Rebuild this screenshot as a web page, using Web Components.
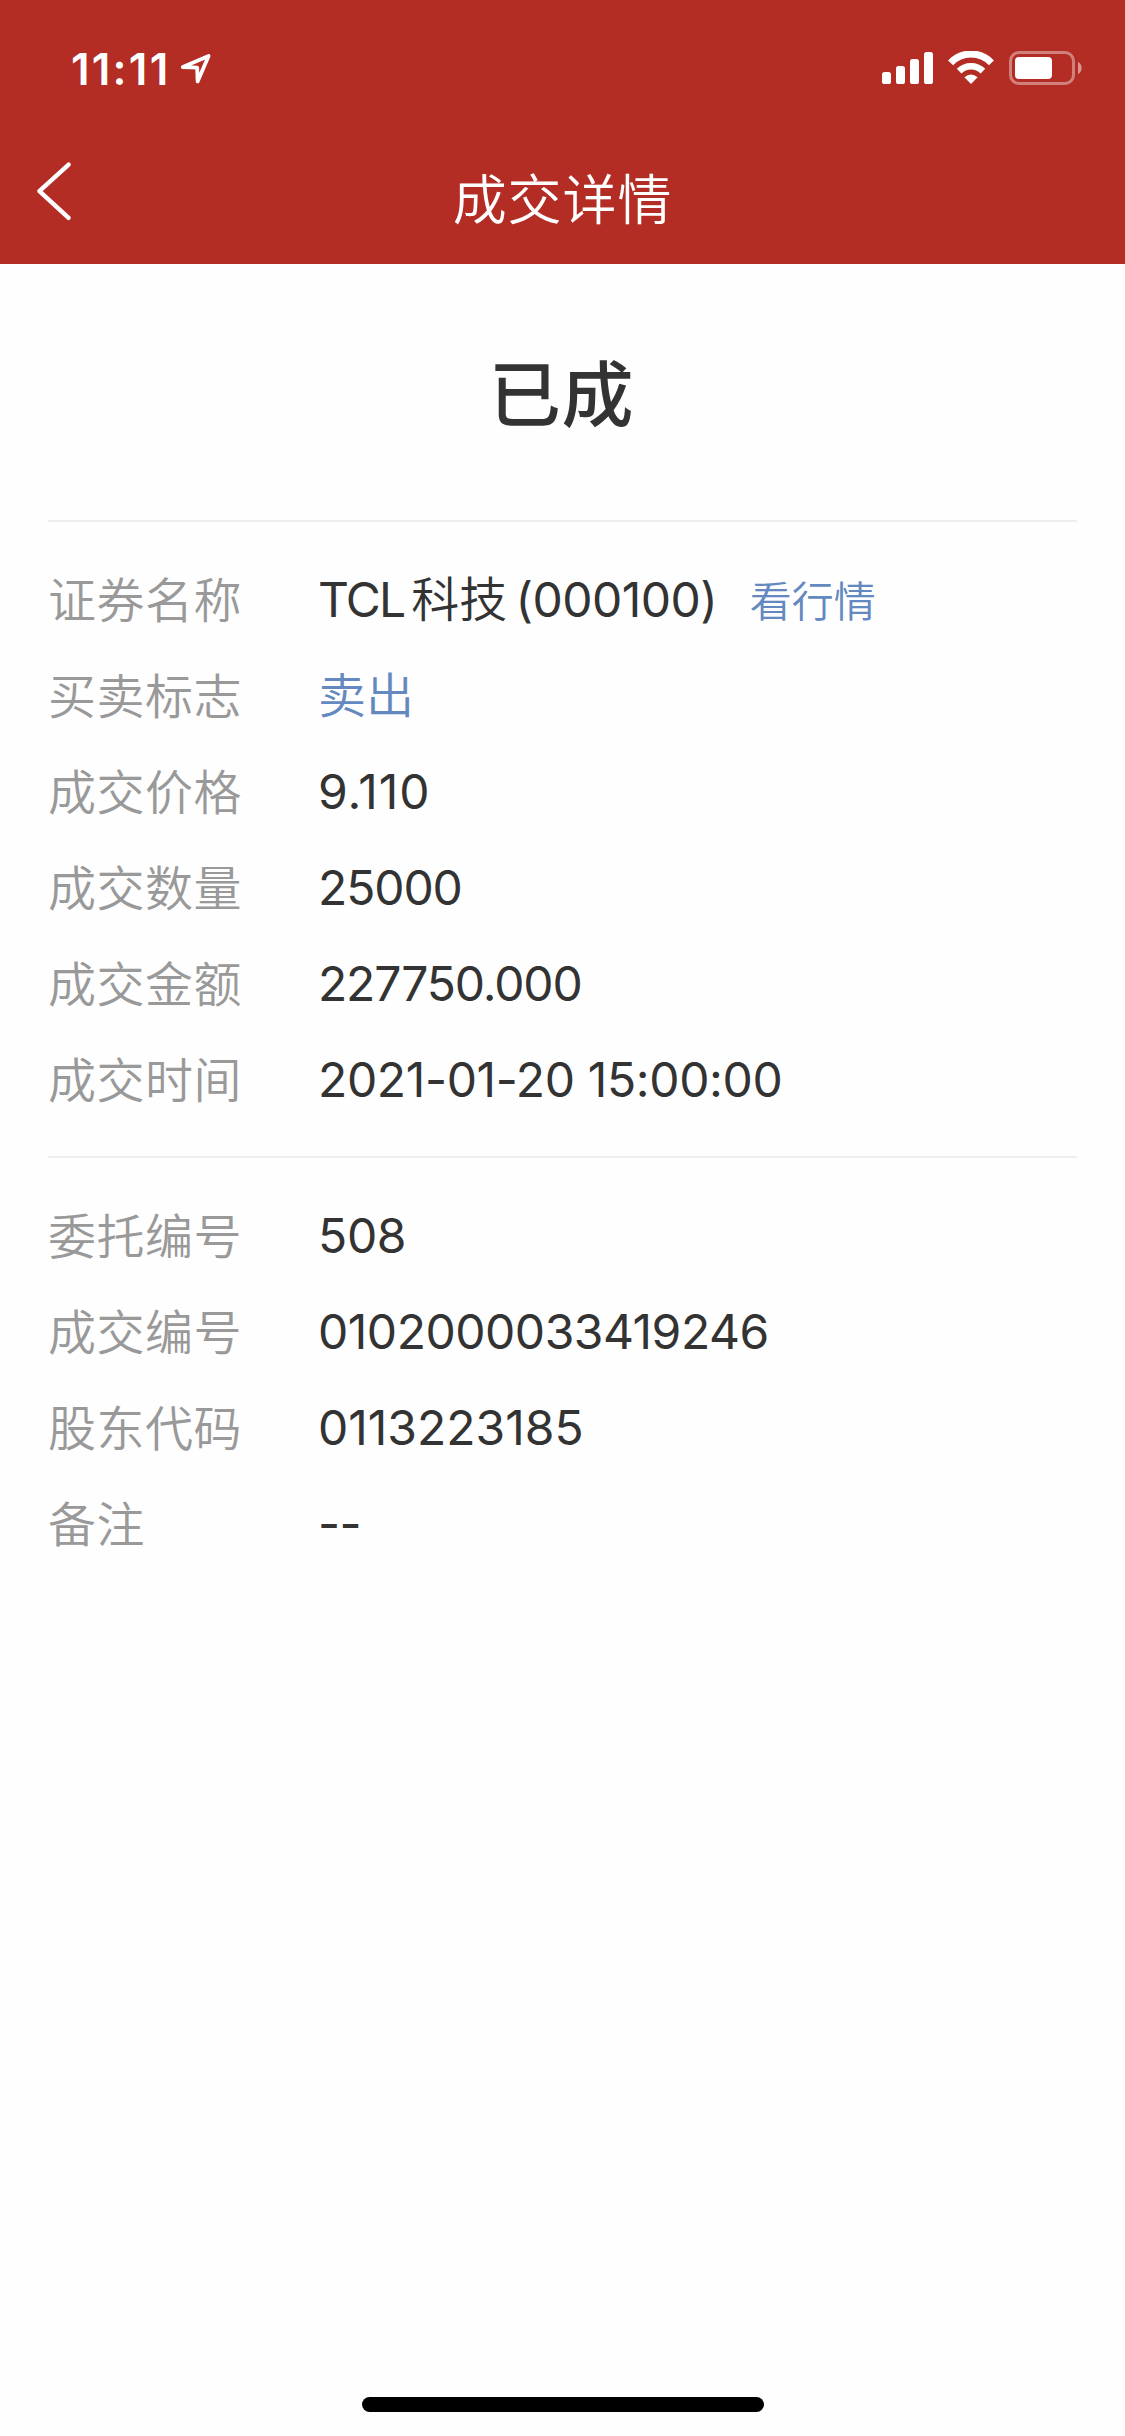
<!DOCTYPE html>
<html lang="zh-CN">
<head>
<meta charset="UTF-8">
<meta name="viewport" content="width=device-width, initial-scale=1.0">
<title>成交详情</title>
<style>
  body {
    margin: 0;
    background: #fefefe;
    font-family: Inter, "Noto Sans CJK SC", sans-serif;
    color: #333;
  }
</style>
</head>
<body>
<trade-page>
  <status-bar slot="header" time="11:11"></status-bar>
  <nav-bar slot="header">成交详情</nav-bar>
  <trade-state>已成</trade-state>
  <detail-group>
    <detail-row label="证券名称"><stock-name name="TCL" suffix="科技" code="(000100)"></stock-name><quote-link>看行情</quote-link></detail-row>
    <detail-row label="买卖标志" class="sell">卖出</detail-row>
    <detail-row label="成交价格" style="--track: 1px">9.110</detail-row>
    <detail-row label="成交数量" style="--track: -1.1px">25000</detail-row>
    <detail-row label="成交金额" style="--track: -1.15px">227750.000</detail-row>
    <detail-row label="成交时间" style="--track: -0.36px">2021-01-20 15:00:00</detail-row>
  </detail-group>
  <detail-group>
    <detail-row label="委托编号" style="--track: -0.3px">508</detail-row>
    <detail-row label="成交编号" style="--track: -0.48px">0102000033419246</detail-row>
    <detail-row label="股东代码">0113223185</detail-row>
    <detail-row label="备注" style="--track: -0.6px">--</detail-row>
  </detail-group>
</trade-page>

<script>
class TradePage extends HTMLElement {
  connectedCallback() {
    this.attachShadow({ mode: 'open' });
    this.shadowRoot.innerHTML = `
      <style>
        :host {
          display: flex;
          flex-direction: column;
          height: 2436px;
        }

        header {
          height: 264px;
          background: #b32d25;
          color: #fff;
        }

        main {
          flex: 1;
          padding: 0 48px;
        }

        .home {
          width: 402px;
          height: 15px;
          margin: 0 auto 24px;
          border-radius: 8px;
          background: #000;
        }
      </style>
      <header><slot name="header"></slot></header>
      <main><slot></slot></main>
      <div class="home"></div>
    `;
  }
}

class StatusBar extends HTMLElement {
  connectedCallback() {
    this.attachShadow({ mode: 'open' });
    this.shadowRoot.innerHTML = `
      <style>
        :host {
          display: flex;
          align-items: center;
          height: 132px;
          padding: 0 43px 0 71px;
        }

        .time {
          font-size: 44px;
          font-weight: 600;
          line-height: 60px;
          letter-spacing: 2.2px;
          padding-top: 6px;
        }

        svg {
          display: block;
        }

        .location {
          margin: 6px auto 0 9px;
        }

        .icons {
          padding-top: 6px;
        }
      </style>
      <span class="time">${this.getAttribute('time')}</span>
      <svg class="location" width="34" height="34" viewBox="0 0 34 34" fill="none" stroke="#fff" stroke-width="3.8" stroke-linejoin="round">
        <path d="M3.8 15 L29.6 4 L18.6 29.4 L18.2 15.7 Z"/>
      </svg>
      <svg class="icons" width="202" height="36" viewBox="0 0 202 36">
        <g fill="#fff">
          <rect x="2" y="21" width="9" height="12" rx="2.6"/>
          <rect x="16" y="15" width="9" height="18" rx="2.6"/>
          <rect x="30" y="8" width="9" height="25" rx="2.6"/>
          <rect x="44" y="1" width="9" height="32" rx="2.6"/>
        </g>
        <g fill="none" stroke="#fff" stroke-width="7">
          <path d="M70.6 11.8 A28 28 0 0 1 111.4 11.8"/>
          <path d="M79.1 20.1 A17 17 0 0 1 102.9 20.1" stroke-width="6.6"/>
        </g>
        <path d="M84.4 26.3 Q91 20.6 97.6 26.3 L91 33 Z" fill="#fff"/>
        <rect x="130.5" y="1.5" width="63" height="31" rx="8.5" fill="none" stroke="#fff" stroke-opacity=".4" stroke-width="3"/>
        <rect x="135" y="6" width="37" height="22" rx="4" fill="#fff"/>
        <path d="M198 11 A6.8 6.8 0 0 1 198 23 Z" fill="#fff" fill-opacity=".5"/>
      </svg>
    `;
  }
}

class NavBar extends HTMLElement {
  connectedCallback() {
    this.attachShadow({ mode: 'open' });
    this.shadowRoot.innerHTML = `
      <style>
        :host {
          display: grid;
          grid-template-columns: 1fr auto 1fr;
          height: 132px;
        }

        svg {
          display: block;
          margin: 27px 0 0 32px;
        }

        .title {
          font: 350 54px/130px "Noto Sans CJK SC", sans-serif;
          letter-spacing: 0.9px;
        }
      </style>
      <svg width="44" height="64" viewBox="0 0 44 64" fill="none" stroke="#fff" stroke-width="4.4" stroke-linecap="round" stroke-linejoin="round">
        <path d="M36.6 5.6 L7.4 32.2 L36.6 58.8"/>
      </svg>
      <div class="title"><slot></slot></div>
    `;
  }
}

class TradeState extends HTMLElement {
  connectedCallback() {
    this.attachShadow({ mode: 'open' });
    this.shadowRoot.innerHTML = `
      <style>
        :host {
          display: block;
          height: 256px;
          margin-right: 2px;
          text-align: center;
          font: 500 72px/252px "Noto Sans CJK SC", sans-serif;
          letter-spacing: 0.7px;
        }
      </style>
      <slot></slot>
    `;
  }
}

class DetailGroup extends HTMLElement {
  connectedCallback() {
    this.attachShadow({ mode: 'open' });
    this.shadowRoot.innerHTML = `
      <style>
        :host {
          display: block;
          border-top: 2px solid #eee;
          padding: 30px 0 28px;
        }
      </style>
      <slot></slot>
    `;
  }
}

class DetailRow extends HTMLElement {
  connectedCallback() {
    this.attachShadow({ mode: 'open' });
    this.shadowRoot.innerHTML = `
      <style>
        :host {
          display: grid;
          grid-template-columns: 270px 1fr;
          height: 96px;
          font-size: 48px;
        }

        .label {
          color: #999;
          font-family: "Noto Sans CJK SC", sans-serif;
          font-weight: 350;
          line-height: 90px;
          letter-spacing: 0.5px;
        }

        .value {
          line-height: 95px;
          letter-spacing: var(--track, 0);
          white-space: nowrap;
        }

        :host(.sell) .value {
          color: #6488c0;
          font-weight: 350;
        }
      </style>
      <span class="label">${this.getAttribute('label')}</span>
      <span class="value"><slot></slot></span>
    `;
  }
}

class StockName extends HTMLElement {
  connectedCallback() {
    this.attachShadow({ mode: 'open' });
    this.shadowRoot.innerHTML = `
      <style>
        :host {
          display: inline;
        }

        .name {
          letter-spacing: -1.8px;
        }

        .suffix {
          font-weight: 350;
          margin: 0 8px 0 7px;
        }

        .code {
          letter-spacing: -0.5px;
        }
      </style>
      <span class="name">${this.getAttribute('name')}</span><span class="suffix">${this.getAttribute('suffix')}</span><span class="code">${this.getAttribute('code')}</span>
    `;
  }
}

class QuoteLink extends HTMLElement {
  connectedCallback() {
    this.attachShadow({ mode: 'open' });
    this.shadowRoot.innerHTML = `
      <style>
        :host {
          display: inline;
          margin-left: 19px;
          color: #6488c0;
          font-size: 42px;
          font-weight: 350;
        }
      </style>
      <slot></slot>
    `;
  }
}

customElements.define('trade-page', TradePage);
customElements.define('status-bar', StatusBar);
customElements.define('nav-bar', NavBar);
customElements.define('trade-state', TradeState);
customElements.define('detail-group', DetailGroup);
customElements.define('detail-row', DetailRow);
customElements.define('stock-name', StockName);
customElements.define('quote-link', QuoteLink);
</script>
</body>
</html>
